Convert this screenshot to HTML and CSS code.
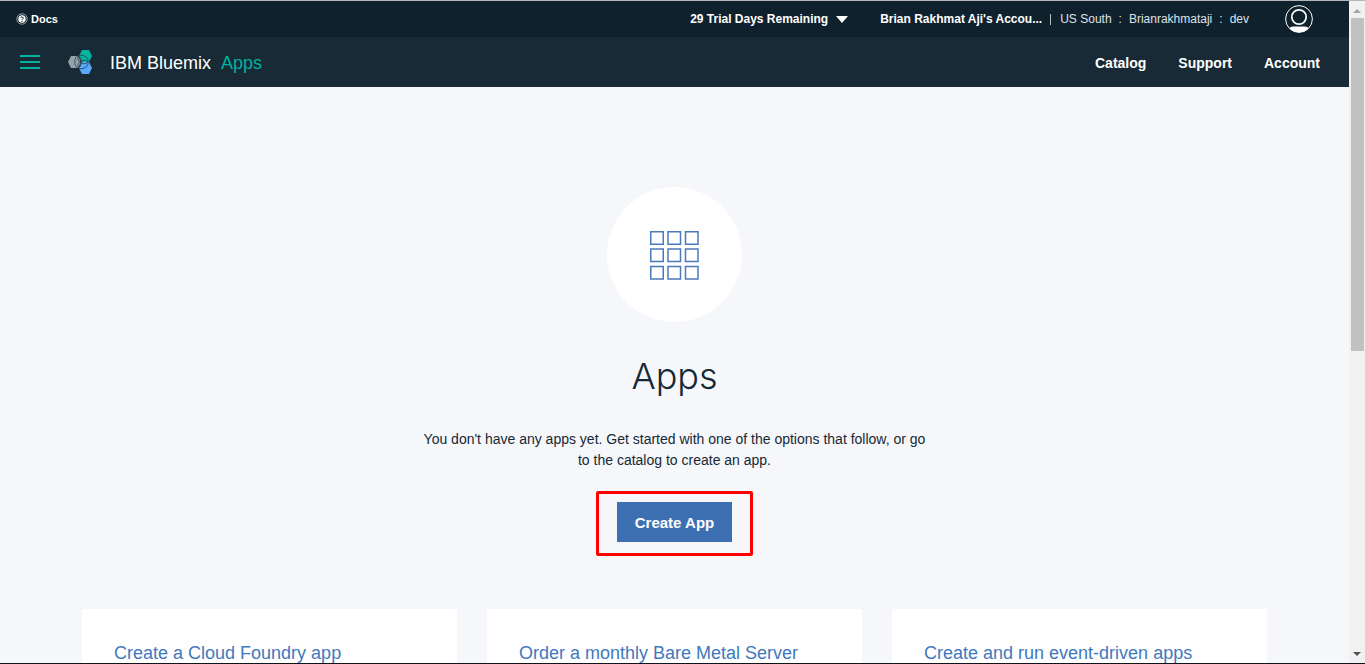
FILE: index.html
```html
<!DOCTYPE html>
<html lang="en">
<head>
<meta charset="utf-8">
<meta name="viewport" content="width=device-width, initial-scale=1">
<title>IBM Bluemix Apps</title>
<link rel="stylesheet" href="styles.css">
</head>
<body class="window">
<div class="page">
  <header>
    <div class="topbar">
      <a class="docs" href="#">
        <svg class="docs-icon" viewBox="0 0 12 12" aria-hidden="true">
          <circle cx="6" cy="6" r="5.2" fill="none" stroke="#b5bcc2" stroke-width="0.8"/>
          <circle cx="6" cy="6" r="3.7" fill="#fff"/>
          <path d="M4.8 5.1a1.2 1.2 0 1 1 1.8 1L6 6.7V7.3M6 8v0.9" fill="none" stroke="#10212e" stroke-width="1"/>
        </svg>
        Docs
      </a>
      <div class="topbar-right">
        <button class="trial" type="button">29 Trial Days Remaining
          <svg class="caret" viewBox="0 0 12 7" aria-hidden="true"><path d="M0 0H12L6 7Z" fill="#fff"/></svg>
        </button>
        <a class="account-name" href="#">Brian Rakhmat Aji's Accou...</a>
        <span class="divider"></span>
        <a class="region" href="#">US South</a>
        <span class="colon">:</span>
        <a class="region" href="#">Brianrakhmataji</a>
        <span class="colon">:</span>
        <a class="region" href="#">dev</a>
        <button class="avatar" type="button" aria-label="Profile">
          <svg class="avatar-icon" viewBox="0 0 28 28" aria-hidden="true">
            <circle cx="14" cy="14" r="13.4" fill="none" stroke="#fff" stroke-width="1"/>
            <circle cx="14" cy="12" r="7.2" fill="none" stroke="#fff" stroke-width="1.7"/>
            <path d="M4.6 23.4Q5 21.5 8 21.5H20Q23 21.5 23.4 23.4A13.4 13.4 0 0 1 4.6 23.4Z" fill="#fff"/>
          </svg>
        </button>
      </div>
    </div>
    <div class="navbar">
      <button class="menu" type="button" aria-label="Menu">
        <svg class="menu-icon" viewBox="0 0 20 14" aria-hidden="true"><path d="M0 1H20M0 7H20M0 13H20" stroke="#00b4a0" stroke-width="2"/></svg>
      </button>
      <a class="brand" href="#">
        <svg class="logo" viewBox="0 0 24 24" aria-hidden="true">
          <path d="M3 6H10L13 12L10 18H3L0 12Z" fill="#97a3ab"/>
          <path d="M14 0H21L24 6L21 12H14L11 6Z" fill="#00b4a0"/>
          <path d="M14 12H21L24 18L21 24H14L11 18Z" fill="#5aaafa"/>
          <g fill="none" stroke="#2b4654" stroke-width="0.8">
            <ellipse cx="10" cy="12" rx="3.2" ry="6"/>
            <ellipse cx="15" cy="9.5" rx="5.5" ry="3.8" transform="rotate(28 15 9.5)"/>
            <ellipse cx="15" cy="14.5" rx="5.5" ry="3.8" transform="rotate(-28 15 14.5)"/>
          </g>
        </svg>
        <span class="brand-name">IBM Bluemix</span>
        <span class="brand-section">Apps</span>
      </a>
      <nav class="links">
        <a class="link" href="#">Catalog</a>
        <a class="link" href="#">Support</a>
        <a class="link" href="#">Account</a>
      </nav>
    </div>
  </header>
  <main class="content">
    <section class="hero">
      <div class="hero-circle">
        <svg class="hero-icon" viewBox="0 0 49 49" aria-hidden="true">
          <g fill="none" stroke="#4a7abc" stroke-width="1.5">
            <path d="M.75 .75h12.5v12.5h-12.5zM18 .75h12.5v12.5h-12.5zM35.5 .75h12.5v12.5h-12.5z"/>
            <path d="M.75 18h12.5v12.5h-12.5zM18 18h12.5v12.5h-12.5zM35.5 18h12.5v12.5h-12.5z"/>
            <path d="M.75 35.5h12.5v12.5h-12.5zM18 35.5h12.5v12.5h-12.5zM35.5 35.5h12.5v12.5h-12.5z"/>
          </g>
        </svg>
      </div>
      <h1 class="title">Apps</h1>
      <p class="lead">You don't have any apps yet. Get started with one of the options that follow, or go to the catalog to create an app.</p>
      <div class="highlight"><button class="create" type="button">Create App</button></div>
    </section>
    <section class="cards">
      <article class="card"><h2 class="card-title"><a class="card-link" href="#">Create a Cloud Foundry app</a></h2></article>
      <article class="card"><h2 class="card-title"><a class="card-link" href="#">Order a monthly Bare Metal Server</a></h2></article>
      <article class="card"><h2 class="card-title"><a class="card-link" href="#">Create and run event-driven apps</a></h2></article>
    </section>
  </main>
</div>
<div class="scrollbar" aria-hidden="true">
  <svg class="arrow" viewBox="0 0 16 17"><path d="M4 12L8 8L12 12Z" fill="#a3a3a3"/></svg>
  <div class="track"><div class="thumb"></div></div>
  <svg class="arrow" viewBox="0 0 16 17"><path d="M4 6H12L8 10Z" fill="#505050"/></svg>
</div>
</body>
</html>
```
FILE: styles.css
```css
* { box-sizing: border-box; }

.window {
  display: flex;
  height: 100vh;
  margin: 0;
  overflow: hidden;
  border-top: 1px solid #b4b5b8;
  border-bottom: 1px solid #101317;
  background: #f5f7fb;
  color: #152935;
  font-family: "Liberation Sans", Arial, sans-serif;
}

a { color: inherit; text-decoration: none; }

button {
  margin: 0;
  padding: 0;
  border: 0;
  background: none;
  color: inherit;
  font: inherit;
  cursor: pointer;
}

svg { display: block; flex: none; }

.page { flex: 1; min-width: 0; overflow: hidden; }

.topbar {
  display: flex;
  align-items: center;
  justify-content: space-between;
  height: 36px;
  padding: 0 36px 0 16px;
  background: #10212e;
  color: #fff;
  font-size: 12px;
}

.docs { display: flex; align-items: center; gap: 3px; font-size: 11px; font-weight: bold; }
.docs-icon { width: 12px; height: 12px; }

.topbar-right { display: flex; align-items: center; }
.trial { display: flex; align-items: center; gap: 8px; font-weight: bold; }
.caret { width: 12px; height: 7px; }
.account-name { margin-left: 32px; font-weight: bold; }
.divider { width: 1px; height: 11px; margin: 0 9px 0 8px; background: #b9c0c5; }
.region { color: #dfe3e6; }
.colon { margin: 0 7px; color: #dfe3e6; }
.avatar { margin-left: 36px; }
.avatar-icon { width: 28px; height: 28px; }

.navbar {
  display: flex;
  align-items: center;
  height: 50px;
  padding: 0 29px 0 20px;
  background: #172a35;
  color: #fff;
}

.menu-icon { width: 20px; height: 14px; }
.brand { display: flex; align-items: center; margin-left: 28px; font-size: 18px; }
.logo { width: 24px; height: 24px; margin-right: 18px; }
.brand-name, .brand-section { padding-top: 2px; }
.brand-section { margin-left: 10px; color: #00b4a0; }
.links { display: flex; gap: 32px; margin-left: auto; padding-top: 2px; font-size: 14px; font-weight: bold; }

.hero { display: flex; flex-direction: column; align-items: center; padding: 100px 20px 53px; }

.hero-circle {
  display: flex;
  align-items: center;
  justify-content: center;
  width: 135px;
  height: 135px;
  padding-top: 2px;
  border-radius: 50%;
  background: #fff;
}

.hero-icon { width: 49px; height: 49px; }
.title { margin: 30px 0 29px; font: 300 36px/48px Inter, "Liberation Sans", sans-serif; }
.lead { max-width: 512px; margin: 0; font-size: 14px; line-height: 21px; text-align: center; }
.highlight { margin-top: 20px; padding: 8px 18px 11px; border: 3px solid #f00; border-radius: 2px; }

.create {
  display: block;
  height: 40px;
  padding: 0 18px;
  background: #3d70b2;
  color: #fff;
  font-size: 15px;
  font-weight: bold;
}

.cards { display: grid; grid-template-columns: repeat(3, 1fr); gap: 30px; padding: 0 82px; }
.card { padding: 32px; background: #fff; }
.card-title { margin: 0; color: #4178be; font-size: 18px; font-weight: normal; line-height: 24px; }

.scrollbar { display: flex; flex-direction: column; width: 16px; background: #f1f1f1; }
.arrow { width: 16px; height: 17px; }
.track { flex: 1; padding: 0 1px 0 2px; }
.thumb { height: 53%; background: #c1c1c1; }
```
